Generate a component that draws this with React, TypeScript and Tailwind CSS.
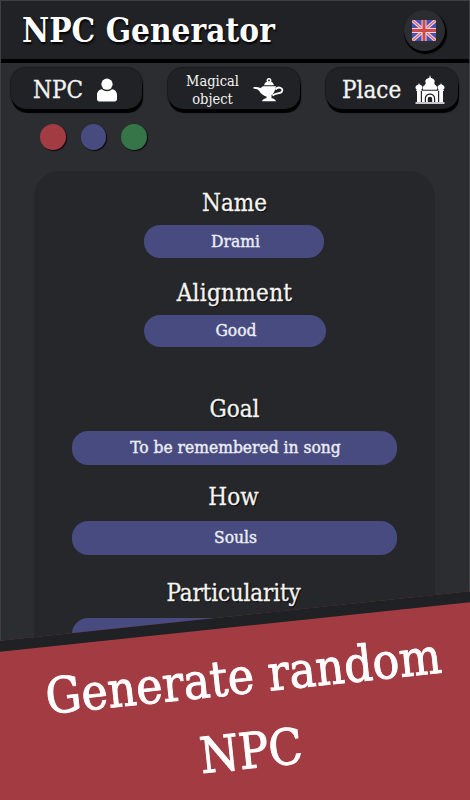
import clsx from "clsx";
import type { ReactNode } from "react";

interface Trait {
  label: string;
  value: string;
  labelClass: string;
  pillClass: string;
}

const TRAITS: Trait[] = [
  {
    label: "Name",
    value: "Drami",
    labelClass: "mt-[16px]",
    pillClass: "mt-[6px] ml-[110px] w-[180px] h-[33px] pl-[3px]",
  },
  {
    label: "Alignment",
    value: "Good",
    labelClass: "mt-[19px] tracking-[0.3px]",
    pillClass: "mt-[6px] ml-[110px] w-[182px] h-[32px] pl-[2px]",
  },
  {
    label: "Goal",
    value: "To be remembered in song",
    labelClass: "mt-[46px]",
    pillClass: "mt-[6px] ml-[38px] w-[325px] h-[34px] pl-[2px]",
  },
  {
    label: "How",
    value: "Souls",
    labelClass: "mt-[16px] pr-[2px]",
    pillClass: "mt-[8px] ml-[38px] w-[325px] h-[34px] pl-[2px]",
  },
  {
    label: "Particularity",
    value: "",
    labelClass: "mt-[22px] pr-[2px] tracking-[-0.15px]",
    pillClass: "mt-[9px] ml-[38px] w-[325px] h-[34px]",
  },
];

const SWATCHES = ["bg-[#a33b43]", "bg-[#474b80]", "bg-[#357548]"];

function PersonIcon() {
  return (
    <svg viewBox="0 0 20 24" className="h-[24px] w-[20px]" fill="#fff">
      <circle cx="10" cy="6.200" r="5.600" />
      <path d="M5 11.200c1.300 1.300 3 2 5 2s3.700-.7 5-2c3.100.3 5 2.700 5 5.700v4.100c0 1.500-.9 2.400-2.400 2.400H2.400C.9 23.400 0 22.500 0 21v-4.100c0-3 1.900-5.400 5-5.700z" />
    </svg>
  );
}

function LampIcon() {
  return (
    <svg viewBox="0 0 31 24" className="h-[24px] w-[31px]" fill="#fff">
      <path
        fillRule="evenodd"
        d="M16 0a2.500 2.500 0 0 1 2.100 3.800c1.500.7 2.500 1.700 2.800 3.400h-9.800c.3-1.700 1.300-2.700 2.800-3.400A2.500 2.500 0 0 1 16 0zm0 1.600a.9.900 0 1 0 0 1.800.9.900 0 0 0 0-1.800z"
      />
      <path d="M.3 9.200C2.800 9 5 8.900 7.500 10L10 8.300h13l-.8 3c-1 3.700-3 6.500-6 7.500h-1.700C10.300 18 8 15.700 6.200 13 5 11.300 3.400 10.600.6 10.700z" />
      <path d="M13.500 18h5v2.300c2.300.3 3.900 1.200 4.500 2.900H9c.6-1.700 2.200-2.600 4.500-2.900z" />
      <path
        d="M22.500 11.500c1.500-2 3.500-2.300 5.300-1.500 2 1 2 3.300.3 4.400-2 1.300-5.600.8-8.600 3"
        fill="none"
        stroke="#fff"
        strokeWidth="1.900"
      />
    </svg>
  );
}

function PalaceIcon() {
  return (
    <svg viewBox="0 0 30 29" className="h-[29px] w-[30px]" fill="#fff">
      <path d="M15 0l.8 2.800c2.600.9 3.900 2 3.900 3.600 0 .8-.3 1.500-.9 2h1v1.300c2.100.9 2.900 2.600 2.100 5.100H8.100c-.8-2.500 0-4.200 2.100-5.100V8.400h1c-.6-.5-.9-1.200-.9-2 0-1.600 1.300-2.700 3.900-3.600z" />
      <path d="M4 8l.6 1.400c2 .7 2.900 1.700 2.900 3.100 0 1-.6 1.800-1.600 2.400h.9V16H1.200v-1.100h.9C1.100 14.300.5 13.500.5 12.500c0-1.400.9-2.400 2.900-3.100zM26 8l.6 1.400c2 .7 2.900 1.700 2.900 3.100 0 1-.6 1.800-1.600 2.400h.9V16h-5.600v-1.100h.9c-1-.6-1.600-1.400-1.600-2.400 0-1.400.9-2.400 2.900-3.100z" />
      <path d="M2 16h3.800v11H2zM24.200 16H28v11h-3.800zM.5 27.300h29v1.400H.5z" />
      <path
        fillRule="evenodd"
        d="M7 15.800h16V27h-2.800v-3.200c0-3.200-2.100-5.300-5.200-5.300s-5.200 2.100-5.200 5.300V27H7z"
      />
      <path d="M11 27v-3.200c0-2.400 1.600-4 4-4s4 1.600 4 4V27h-1.800v-3c0-1.400-.9-2.200-2.200-2.200s-2.200.8-2.200 2.200v3z" />
    </svg>
  );
}

function UnionJack() {
  return (
    <svg viewBox="0 0 24 21" className="h-[21px] w-[24px]">
      <rect width="24" height="21" rx="1" fill="#4850b4" />
      <path d="M0 0l24 21M24 0L0 21" stroke="#f0d3dc" strokeWidth="3.400" />
      <path d="M0 0l24 21M24 0L0 21" stroke="#d9686d" strokeWidth="1.300" />
      <path d="M12 0v21M0 10.500h24" stroke="#f3d3d6" strokeWidth="5" />
      <path d="M12 0v21M0 10.500h24" stroke="#d04a4c" strokeWidth="3" />
    </svg>
  );
}

function TabButton({ className, children }: { className?: string; children: ReactNode }) {
  return (
    <button
      type="button"
      className={clsx(
        "flex h-[41px] items-center rounded-[15px] bg-[#212226] pt-[2px] shadow-[1px_4px_1px_#000,0_0_1px_1px_#1a1b1e]",
        className
      )}
    >
      {children}
    </button>
  );
}

export default function App() {
  return (
    <div className="relative h-[800px] w-[470px] overflow-hidden bg-[#2c2d31] font-['DejaVu_Serif_Condensed','DejaVu_Serif',serif] text-[#f4f4f2] [font-stretch:condensed]">
      <div className="h-[800px] overflow-hidden border-x border-[#3e4043]">
        <header className="flex h-[63px] items-center justify-between border-t border-b-4 border-t-[#3e4043] border-b-black bg-[#212226] pr-[24px] pl-[21px]">
          <h1 className="pt-[2px] text-[33px] leading-[40px] font-bold tracking-[0.05px] whitespace-nowrap text-white [text-shadow:1px_2px_2px_#000]">
            NPC Generator
          </h1>
          <button
            type="button"
            className="flex size-[41px] items-center justify-center rounded-full bg-[#2c2d31] pr-[1px] shadow-[1px_2px_1px_1px_#000]"
          >
            <UnionJack />
          </button>
        </header>

        <nav className="mt-[5px] flex pl-[10px] [text-shadow:1px_1px_1px_#000]">
          <TabButton className="w-[131px] pl-[22px]">
            <span className="w-[64px] text-left text-[24px] leading-[30px] whitespace-nowrap [-webkit-text-stroke:0.3px]">
              NPC
            </span>
            <PersonIcon />
          </TabButton>
          <TabButton className="ml-[26px] w-[132px] pl-[16px]">
            <span className="w-[57px] text-center text-[14.500px] leading-[18px]">Magical object</span>
            <span className="ml-[12px]">
              <LampIcon />
            </span>
          </TabButton>
          <TabButton className="ml-[26px] w-[132px] pl-[16px]">
            <span className="w-[73px] text-left text-[24px] leading-[30px] whitespace-nowrap [-webkit-text-stroke:0.3px]">
              Place
            </span>
            <PalaceIcon />
          </TabButton>
        </nav>

        <div className="mt-[15px] flex gap-[15px] pl-[39px]">
          {SWATCHES.map((color) => (
            <span
              key={color}
              className={clsx("size-[25.500px] rounded-full shadow-[1px_1px_1px_#0b0b0d]", color)}
            />
          ))}
        </div>

        <main className="mt-[21.500px] ml-[33px] flex h-[640px] w-[401px] flex-col rounded-[26px] bg-[#26272a]">
          {TRAITS.map((trait) => (
            <section key={trait.label}>
              <h2
                className={clsx(
                  "h-[32px] text-center text-[24px] leading-[32px] [-webkit-text-stroke:0.3px] [text-shadow:1px_1px_1px_#000]",
                  trait.labelClass
                )}
              >
                {trait.label}
              </h2>
              <p
                className={clsx(
                  "flex items-center justify-center rounded-[16px] bg-[#474b80] text-[17.300px] text-[#ecedf5] [-webkit-text-stroke:0.4px]",
                  trait.pillClass
                )}
              >
                {trait.value}
              </p>
            </section>
          ))}
        </main>
      </div>

      {/* Slanted caption laid over the bottom of the sheet */}
      <div className="absolute top-[616px] -left-[25px] h-[260px] w-[520px] origin-top -rotate-6 border-t-[11px] border-[#1f2124] bg-[#a33b43] pt-[13px] text-center text-[49.500px] leading-[75px] text-white [-webkit-text-stroke:0.9px]">
        <p className="pl-[4px]">Generate random</p>
        <p className="pl-[4px]">NPC</p>
      </div>
    </div>
  );
}
